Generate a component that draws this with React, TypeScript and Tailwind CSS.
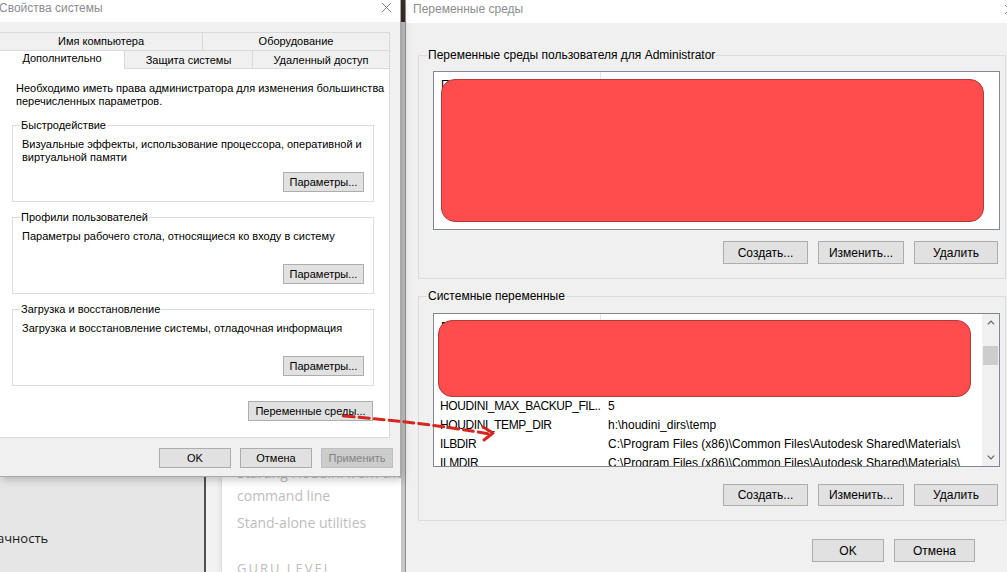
import React from "react";

type BtnProps = { label: string; className?: string; disabled?: boolean };

function Btn({ label, className = "", disabled = false }: BtnProps) {
  return (
    <button
      type="button"
      className={`flex shrink-0 items-center justify-center border leading-none ${
        disabled
          ? "border-[#bfbfbf] bg-[#cccccc] text-[#838383]"
          : "border-[#adadad] bg-[#e1e1e1] text-black"
      } ${className}`}
    >
      {label}
    </button>
  );
}

function CloseIcon({ className = "" }: { className?: string }) {
  return (
    <svg viewBox="0 0 12 12" className={className} fill="none" stroke="#7a7a7a" strokeWidth="1">
      <path d="M1 1 L11 11 M11 1 L1 11" />
    </svg>
  );
}

function Chevron({ up }: { up: boolean }) {
  return (
    <svg viewBox="0 0 8 5" className="h-[5px] w-[8px]" fill="none" stroke="#606060" strokeWidth="1.2">
      <path d={up ? "M0.8 4.4 L4 1.2 L7.2 4.4" : "M0.8 0.6 L4 3.8 L7.2 0.6"} />
    </svg>
  );
}

type GroupProps = { title: string; lines: string[] };

function Group({ title, lines }: GroupProps) {
  return (
    <fieldset className="w-[362px] border border-[#dcdcdc] pt-[6px] pr-[9px] pb-[9px] pl-[9px]">
      <legend className="-ml-[2px] px-[1px] leading-[14px]">{title}</legend>
      <div className="flex h-[54px] flex-col justify-between">
        <p className="whitespace-nowrap leading-[13px]">
          {lines.map((l, i) => (
            <span key={i} className="block">
              {l}
            </span>
          ))}
        </p>
        <div className="flex justify-end">
          <Btn label="Параметры..." className="h-[20px] w-[81px]" />
        </div>
      </div>
    </fieldset>
  );
}

function ListHeader() {
  return (
    <div className="flex h-[25px] text-black">
      <div className="flex w-[167px] items-center border-r border-[#e5e5e5] pl-[7px]">Переменная</div>
      <div className="flex items-center pl-[7px]">Значение</div>
    </div>
  );
}

const systemRows = [
  { name: "", value: "" },
  { name: "", value: "" },
  { name: "", value: "" },
  { name: "HOUDINI_MAX_BACKUP_FIL...", value: "5" },
  { name: "HOUDINI_TEMP_DIR", value: "h:\\houdini_dirs\\temp" },
  { name: "ILBDIR", value: "C:\\Program Files (x86)\\Common Files\\Autodesk Shared\\Materials\\" },
  { name: "ILMDIR", value: "C:\\Program Files (x86)\\Common Files\\Autodesk Shared\\Materials\\" },
];

function Redacted({ className }: { className: string }) {
  return <div className={`absolute rounded-[14px] border border-[#b03a3a] bg-[#ff4c4c] ${className}`} />;
}

export default function App() {
  return (
    <div className="relative flex h-[572px] w-[1007px] overflow-hidden bg-[#f0f0f0] font-['Liberation_Sans',Arial,sans-serif] text-[12px] text-black">
      {/* left column: system properties + page behind */}
      <div className="flex w-[401px] shrink-0 flex-col">
        <div className="relative z-10 flex h-[477px] shrink-0 flex-col border-r border-b border-[#a8a8a8] bg-[#f0f0f0] text-[11px] shadow-[2px_3px_8px_rgba(0,0,0,0.22)]">
          <div className="flex h-[22px] items-start justify-between bg-white">
            <span className="-ml-[1px] text-[12px] leading-[16px] text-[#8d8d8d]">Свойства системы</span>
            <CloseIcon className="mt-[2px] mr-[8px] h-[11px] w-[11px]" />
          </div>

          <div className="pt-[10px] pr-[10px]">
            {/* tabs */}
            <div className="flex h-[18px]">
              <div className="flex w-[203px] items-center justify-center border-t border-r border-[#d9d9d9]">
                Имя компьютера
              </div>
              <div className="flex w-[187px] items-center justify-center border-t border-r border-[#d9d9d9]">
                Оборудование
              </div>
            </div>
            <div className="flex h-[18px]">
              <div className="relative z-10 flex h-[19px] w-[125px] items-center justify-center border-t border-r border-[#d9d9d9] bg-white pb-[3px]">
                Дополнительно
              </div>
              <div className="flex w-[128px] items-center justify-center border-t border-r border-[#d9d9d9] pt-[2px]">
                Защита системы
              </div>
              <div className="flex w-[137px] items-center justify-center border-t border-r border-[#d9d9d9] pt-[2px]">
                Удаленный доступ
              </div>
            </div>

            {/* panel */}
            <div className="h-[370px] border-t border-r border-b border-[#d9d9d9] bg-white">
              <p className="whitespace-nowrap pt-[13px] pl-[16px] leading-[13px]">
                <span className="block">Необходимо иметь права администратора для изменения большинства</span>
                <span className="block">перечисленных параметров.</span>
              </p>
              <div className="mt-[10px] flex w-[374px] flex-col gap-[8px] pl-[12px]">
                <Group
                  title="Быстродействие"
                  lines={["Визуальные эффекты, использование процессора, оперативной и", "виртуальной памяти"]}
                />
                <Group title="Профили пользователей" lines={["Параметры рабочего стола, относящиеся ко входу в систему"]} />
                <Group title="Загрузка и восстановление" lines={["Загрузка и восстановление системы, отладочная информация"]} />
                <div className="mt-[7px] flex justify-end pr-[1px]">
                  <Btn label="Переменные среды..." className="h-[20px] w-[125px]" />
                </div>
              </div>
            </div>
          </div>

          <div className="mt-[10px] flex justify-end gap-[9px] pr-[7px]">
            <Btn label="OK" className="h-[20px] w-[72px]" />
            <Btn label="Отмена" className="h-[20px] w-[72px]" />
            <Btn label="Применить" className="h-[20px] w-[72px]" disabled />
          </div>
        </div>

        {/* page behind the dialog */}
        <div className="flex min-h-0 flex-1 font-['Open_Sans',sans-serif]">
          <div className="w-[204px] bg-[#e6e6e6] pt-[52px]">
            <span className="-ml-[3px] block text-[13px] text-[#1a1a1a]">ачность</span>
          </div>
          <div className="w-[2px] bg-[#505050]" />
          <div className="w-[15px] bg-[#f2f2f2]" />
          <div className="flex-1 overflow-hidden border-l border-[#dddddd] bg-white pl-[15px] text-[14px] whitespace-nowrap text-[#bdbdbd] shadow-[-2px_0_4px_rgba(0,0,0,0.06)]">
            <p className="-mt-[16px] leading-[23px]">
              <span className="block">Starting Houdini from the</span>
              <span className="block">command line</span>
            </p>
            <p className="mt-[4px] leading-[23px]">Stand-alone utilities</p>
            <p className="mt-[23px] text-[13px] leading-[23px] tracking-[2px]">GURU LEVEL</p>
          </div>
        </div>
      </div>

      {/* strip between windows */}
      <div className="flex w-[4px] shrink-0 flex-col">
        <div className="h-[22px] bg-[#3a2e28]" />
        <div className="flex-1 bg-[#c6c6c6]" />
      </div>

      {/* environment variables dialog */}
      <div className="flex flex-1 flex-col border-l border-[#8f8f8f] bg-[#f0f0f0]">
        <div className="flex h-[23px] items-start justify-between bg-white pl-[7px]">
          <span className="leading-[18px] text-[#8d8d8d]">Переменные среды</span>
          <CloseIcon className="mt-[4px] -mr-[8px] h-[11px] w-[11px]" />
        </div>

        <div className="pt-[25px] pr-[1px] pl-[12px]">
          <fieldset className="border border-[#dcdcdc] pt-[9px] pr-[5px] pb-[14px] pl-[14px]">
            <legend className="-ml-[6px] px-[1px] leading-[14px]">Переменные среды пользователя для Administrator</legend>
            <div className="relative h-[159px] overflow-hidden border border-[#828790] bg-white">
              <ListHeader />
              <Redacted className="top-[7px] left-[7px] h-[143px] w-[543px]" />
            </div>
            <div className="mt-[11px] flex justify-end gap-[10px] pr-[2px]">
              <Btn label="Создать..." className="h-[23px] w-[85px]" />
              <Btn label="Изменить..." className="h-[23px] w-[86px]" />
              <Btn label="Удалить" className="h-[23px] w-[84px]" />
            </div>
          </fieldset>

          <fieldset className="mt-[10px] border border-[#dcdcdc] pt-[10px] pr-[5px] pb-[14px] pl-[14px]">
            <legend className="-ml-[6px] px-[1px] leading-[14px]">Системные переменные</legend>
            <div className="relative flex h-[154px] overflow-hidden border border-[#828790] bg-white">
              <div className="flex-1">
                <ListHeader />
                {systemRows.map((r, i) => (
                  <div key={i} className="flex h-[19px] items-center whitespace-nowrap">
                    <div className="w-[167px] overflow-hidden pl-[6px] tracking-[-0.4px]">{r.name}</div>
                    <div className="pl-[7px]">{r.value}</div>
                  </div>
                ))}
              </div>
              <div className="flex w-[17px] flex-col bg-[#f0f0f0]">
                <div className="flex h-[17px] items-center justify-center">
                  <Chevron up />
                </div>
                <div className="mx-[1px] mt-[15px] h-[19px] bg-[#cdcdcd]" />
                <div className="flex-1" />
                <div className="flex h-[17px] items-center justify-center">
                  <Chevron up={false} />
                </div>
              </div>
              <Redacted className="top-[6px] left-[4px] h-[77px] w-[533px]" />
            </div>
            <div className="mt-[17px] flex justify-end gap-[10px] pr-[2px]">
              <Btn label="Создать..." className="h-[22px] w-[85px]" />
              <Btn label="Изменить..." className="h-[22px] w-[86px]" />
              <Btn label="Удалить" className="h-[22px] w-[84px]" />
            </div>
          </fieldset>

          <div className="mt-[18px] flex justify-end gap-[10px] pr-[31px]">
            <Btn label="OK" className="h-[23px] w-[72px]" />
            <Btn label="Отмена" className="h-[23px] w-[81px]" />
          </div>
        </div>
      </div>

      {/* hand-drawn dashed arrow */}
      <svg className="pointer-events-none absolute inset-0 z-20 h-full w-full" viewBox="0 0 1007 572" fill="none">
        <path
          d="M344 416 Q 420 422 490 434"
          stroke="#d5271f"
          strokeWidth="3"
          strokeDasharray="10 5"
          strokeLinecap="round"
        />
        <path d="M483 427 L493 433 L484 440" stroke="#d5271f" strokeWidth="3" strokeLinecap="round" strokeLinejoin="round" />
      </svg>
    </div>
  );
}
